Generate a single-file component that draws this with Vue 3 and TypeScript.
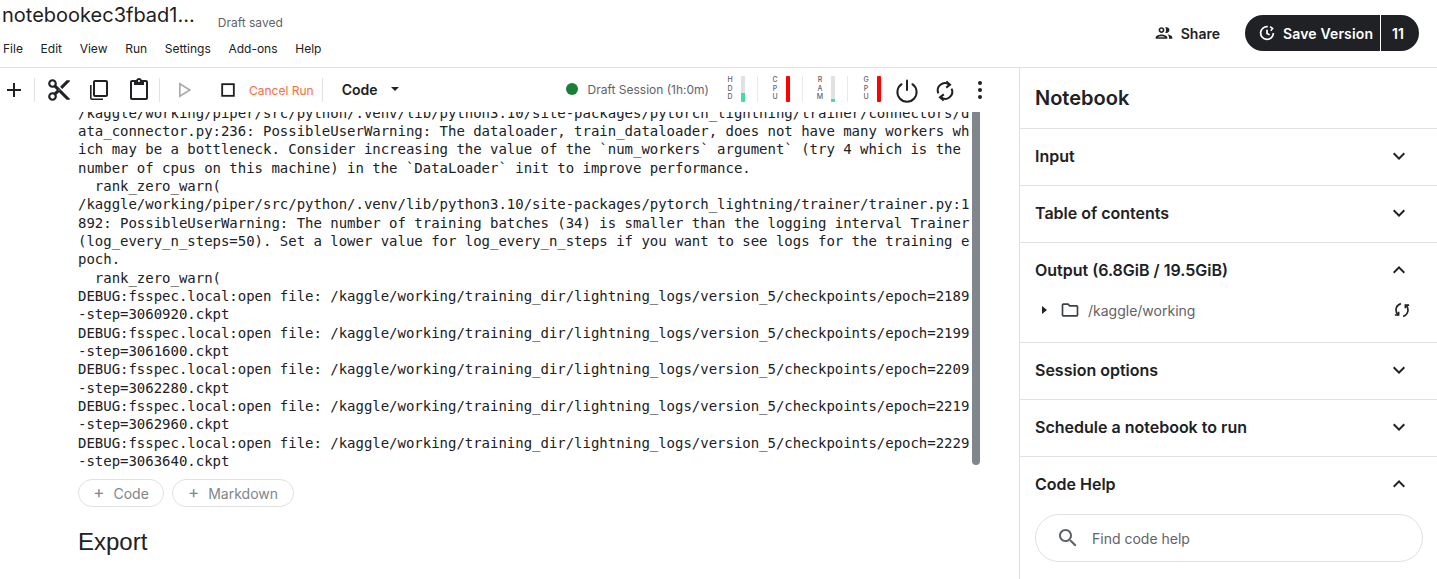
<script setup lang="ts">
const lines: string[] = [
  '/kaggle/working/piper/src/python/.venv/lib/python3.10/site-packages/pytorch_lightning/trainer/connectors/d',
  'ata_connector.py:236: PossibleUserWarning: The dataloader, train_dataloader, does not have many workers wh',
  'ich may be a bottleneck. Consider increasing the value of the `num_workers` argument` (try 4 which is the ',
  'number of cpus on this machine) in the `DataLoader` init to improve performance.',
  '  rank_zero_warn(',
  '/kaggle/working/piper/src/python/.venv/lib/python3.10/site-packages/pytorch_lightning/trainer/trainer.py:1',
  '892: PossibleUserWarning: The number of training batches (34) is smaller than the logging interval Trainer',
  '(log_every_n_steps=50). Set a lower value for log_every_n_steps if you want to see logs for the training e',
  'poch.',
  '  rank_zero_warn(',
  'DEBUG:fsspec.local:open file: /kaggle/working/training_dir/lightning_logs/version_5/checkpoints/epoch=2189',
  '-step=3060920.ckpt',
  'DEBUG:fsspec.local:open file: /kaggle/working/training_dir/lightning_logs/version_5/checkpoints/epoch=2199',
  '-step=3061600.ckpt',
  'DEBUG:fsspec.local:open file: /kaggle/working/training_dir/lightning_logs/version_5/checkpoints/epoch=2209',
  '-step=3062280.ckpt',
  'DEBUG:fsspec.local:open file: /kaggle/working/training_dir/lightning_logs/version_5/checkpoints/epoch=2219',
  '-step=3062960.ckpt',
  'DEBUG:fsspec.local:open file: /kaggle/working/training_dir/lightning_logs/version_5/checkpoints/epoch=2229',
  '-step=3063640.ckpt',
]
const menus = ['File', 'Edit', 'View', 'Run', 'Settings', 'Add-ons', 'Help']
const meters = [
  { letters: ['H', 'D', 'D'], fill: 35, color: '#3fdcb0' },
  { letters: ['C', 'P', 'U'], fill: 100, color: '#ff0000' },
  { letters: ['R', 'A', 'M'], fill: 12, color: '#3fdcb0' },
  { letters: ['G', 'P', 'U'], fill: 100, color: '#ff0000' },
]
const down = 'M16.59 8.59L12 13.17 7.41 8.59 6 10l6 6 6-6z'
const up = 'M12 8l-6 6 1.41 1.41L12 10.83l4.59 4.58L18 14z'
</script>

<template>
  <div class="page">
    <header class="header">
      <div class="head-left">
        <div class="title-row">
          <span class="title">notebookec3fbad1...</span>
          <span class="saved">Draft saved</span>
        </div>
        <nav class="menu">
          <span v-for="m in menus" :key="m">{{ m }}</span>
        </nav>
      </div>
      <div class="head-right">
        <div class="share">
          <svg viewBox="0 0 24 24" width="20" height="20"><path fill="#202124" d="M9 13.75c-2.34 0-7 1.17-7 3.5V19h14v-1.75c0-2.33-4.66-3.5-7-3.5zM4.34 17c.84-.58 2.87-1.25 4.66-1.25s3.82.67 4.66 1.25H4.34zM9 12c1.93 0 3.5-1.57 3.5-3.5S10.93 5 9 5 5.5 6.57 5.5 8.5 7.07 12 9 12zm0-5c.83 0 1.5.67 1.5 1.5S9.83 10 9 10s-1.5-.67-1.5-1.5S8.17 7 9 7zm7.04 6.81c1.16.84 1.96 1.96 1.96 3.44V19h4v-1.75c0-2.02-3.5-3.17-5.96-3.44zM15 12c1.93 0 3.5-1.57 3.5-3.5S16.93 5 15 5c-.54 0-1.04.13-1.5.35.63.89 1 1.98 1 3.15s-.37 2.26-1 3.15c.46.22.96.35 1.5.35z"/></svg>
          <span>Share</span>
        </div>
        <div class="save">
          <div class="save-main">
            <svg viewBox="0 0 24 24" width="18" height="18" fill="none" stroke="#fff" stroke-width="2.3"><path d="M13 3.6A8.5 8.5 0 1 0 20.5 12"/><path d="M12 7.5v5l3.5 2"/><path d="M16 3.5l3.5 2.5-2.5 3" stroke-width="2"/></svg>
            <span>Save Version</span>
          </div>
          <div class="save-count">11</div>
        </div>
      </div>
    </header>

    <div class="body">
      <main class="left">
        <div class="toolbar">
          <button class="tb plus"><svg viewBox="0 0 24 24" width="24" height="24"><path fill="#202124" d="M19 13h-6v6h-2v-6H5v-2h6V5h2v6h6v2z"/></svg></button>
          <i class="tsep sep1"></i>
          <button class="tb cut"><svg viewBox="0 0 24 24" width="26" height="26"><path fill="#202124" d="M9.64 7.64c.23-.5.36-1.05.36-1.64 0-2.21-1.79-4-4-4S2 3.79 2 6s1.79 4 4 4c.59 0 1.14-.13 1.64-.36L10 12l-2.36 2.36C7.14 14.13 6.59 14 6 14c-2.21 0-4 1.79-4 4s1.79 4 4 4 4-1.79 4-4c0-.59-.13-1.14-.36-1.64L12 14l7 7h3v-1L9.64 7.64zM6 8c-1.1 0-2-.89-2-2s.9-2 2-2 2 .89 2 2-.9 2-2 2zm0 12c-1.1 0-2-.89-2-2s.9-2 2-2 2 .89 2 2-.9 2-2 2zm6-7.5c-.28 0-.5-.22-.5-.5s.22-.5.5-.5.5.22.5.5-.22.5-.5.5zM19 3l-6 6 2 2 7-7V3h-3z"/></svg></button>
          <button class="tb copy"><svg viewBox="0 0 24 24" width="24" height="24"><path fill="#202124" d="M8 2h11c1.1 0 2 .9 2 2v13c0 1.1-.9 2-2 2H8c-1.1 0-2-.9-2-2V4c0-1.1.9-2 2-2zm0 2v13h11V4H8zM3 7h1.6v13c0 .2.2.4.4.4h11V22H5c-1.1 0-2-.9-2-2V7z"/></svg></button>
          <button class="tb paste"><svg viewBox="0 0 24 24" width="24" height="24"><path fill="#202124" d="M19 2h-4.18C14.4.84 13.3 0 12 0c-1.3 0-2.4.84-2.82 2H5c-1.1 0-2 .9-2 2v16c0 1.1.9 2 2 2h14c1.1 0 2-.9 2-2V4c0-1.1-.9-2-2-2zm-7 0c.55 0 1 .45 1 1s-.45 1-1 1-1-.45-1-1 .45-1 1-1zm7 18H5V4h2v3h10V4h2v16z"/></svg></button>
          <i class="tsep sep2"></i>
          <button class="tb play"><svg viewBox="0 0 24 24" width="20" height="20"><path fill="none" stroke="#a9abae" stroke-width="2" d="M7 4.5v15L19 12z"/></svg></button>
          <button class="tb stop"><svg viewBox="0 0 24 24" width="20" height="20"><rect x="5" y="5" width="14" height="14" fill="none" stroke="#202124" stroke-width="2.2"/></svg></button>
          <span class="cancel">Cancel Run</span>
          <i class="tsep sep3"></i>
          <span class="code">Code</span>
          <svg class="caret" viewBox="0 0 10 5" width="8" height="4"><path fill="#202124" d="M0 0h10L5 5z"/></svg>
          <span class="spacer"></span>
          <span class="dot"></span>
          <span class="session">Draft Session (1h:0m)</span>
          <div class="meters">
            <div v-for="(m, i) in meters" :key="i" class="meter">
              <div class="letters"><span v-for="(l, j) in m.letters" :key="j">{{ l }}</span></div>
              <div class="track"><div class="fill" :style="{ height: m.fill + '%', background: m.color }"></div></div>
            </div>
          </div>
          <button class="tb power"><svg viewBox="0 0 24 24" width="24" height="24" fill="none" stroke="#202124" stroke-width="2" stroke-linecap="round"><path d="M12 1.5v9.5"/><path d="M6.6 5.2a9.6 9.6 0 1 0 10.8 0"/></svg></button>
          <button class="tb sync"><svg viewBox="0 0 24 24" width="22" height="22" fill="none" stroke="#202124" stroke-width="2.2"><path d="M4.8 14.5A7.8 7.8 0 0 1 16.5 5"/><path d="M13.5 1.5l4 3.6-4.2 3.2"/><path d="M19.2 9.5A7.8 7.8 0 0 1 7.5 19"/><path d="M10.5 22.5l-4-3.6 4.2-3.2"/></svg></button>
          <button class="tb more"><svg viewBox="0 0 6 20" width="6" height="20"><circle cx="3" cy="3" r="2" fill="#202124"/><circle cx="3" cy="10" r="2" fill="#202124"/><circle cx="3" cy="17" r="2" fill="#202124"/></svg></button>
        </div>

        <div class="notebook">
          <div class="output">
            <div class="clip">
              <div class="text">
                <div v-for="(l, i) in lines" :key="i" class="line">{{ l }}</div>
              </div>
            </div>
            <div class="scrollbar"></div>
          </div>
          <div class="adders">
            <span class="adder code-add"><b>+</b>Code</span>
            <span class="adder md-add"><b>+</b>Markdown</span>
          </div>
          <h2 class="export">Export</h2>
        </div>
      </main>

      <aside class="side">
        <h1 class="side-title">Notebook</h1>
        <section class="sec"><div class="sec-head"><span>Input</span><svg viewBox="0 0 24 24" width="24" height="24"><path :d="down"/></svg></div></section>
        <section class="sec"><div class="sec-head"><span>Table of contents</span><svg viewBox="0 0 24 24" width="24" height="24"><path :d="down"/></svg></div></section>
        <section class="sec output-sec">
          <div class="sec-head"><span>Output (6.8GiB / 19.5GiB)</span><svg viewBox="0 0 24 24" width="24" height="24"><path :d="up"/></svg></div>
          <div class="tree">
            <svg class="tri" viewBox="0 0 5 8" width="5" height="8"><path fill="#202124" d="M0 0l5 4-5 4z"/></svg>
            <svg class="folder" viewBox="0 0 24 24" width="20" height="20"><path fill="#3c4043" d="M20 6h-8l-2-2H4c-1.1 0-1.99.9-1.99 2L2 18c0 1.1.9 2 2 2h16c1.1 0 2-.9 2-2V8c0-1.1-.9-2-2-2zm0 12H4V6h5.17l2 2H20v10z"/></svg>
            <span class="path">/kaggle/working</span>
            <svg class="refresh" viewBox="0 0 24 24" width="18" height="18" fill="none" stroke="#202124" stroke-width="2.2"><path d="M10.5 3.5C6.5 5 4 8 4 12c0 2.6 1 5 2.8 6.6"/><path d="M2.5 18.6h5v-4.4"/><path d="M13.5 20.5c4-1.5 6.5-4.5 6.5-8.5 0-2.6-1-5-2.8-6.6"/><path d="M21.5 5.4h-5v4.4"/></svg>
          </div>
        </section>
        <section class="sec"><div class="sec-head"><span>Session options</span><svg viewBox="0 0 24 24" width="24" height="24"><path :d="down"/></svg></div></section>
        <section class="sec"><div class="sec-head"><span>Schedule a notebook to run</span><svg viewBox="0 0 24 24" width="24" height="24"><path :d="down"/></svg></div></section>
        <section class="sec last">
          <div class="sec-head"><span>Code Help</span><svg viewBox="0 0 24 24" width="24" height="24"><path :d="up"/></svg></div>
          <div class="search">
            <svg viewBox="0 0 24 24" width="24" height="24"><path fill="#5f6368" d="M15.5 14h-.79l-.28-.27C15.41 12.59 16 11.11 16 9.5 16 5.91 13.09 3 9.5 3S3 5.91 3 9.5 5.91 16 9.5 16c1.61 0 3.09-.59 4.23-1.57l.27.28v.79l5 4.99L20.49 19l-4.99-5zm-6 0C7.01 14 5 11.99 5 9.5S7.01 5 9.5 5 14 7.01 14 9.5 11.99 14 9.5 14z"/></svg>
            <span>Find code help</span>
          </div>
        </section>
      </aside>
    </div>
  </div>
</template>

<style scoped>
.page {
  width: 1437px;
  height: 579px;
  overflow: hidden;
  background: #fff;
  color: #202124;
  font-family: Inter, "Liberation Sans", sans-serif;
  display: flex;
  flex-direction: column;
}
.header {
  height: 67px;
  flex: none;
  display: flex;
  justify-content: space-between;
  border-bottom: 1px solid #e0e1e3;
  box-sizing: content-box;
}
.head-left { padding-left: 2px; display: flex; flex-direction: column; }
.title-row { display: flex; align-items: flex-start; height: 34px; padding-top: 2px; box-sizing: border-box; }
.title { font-size: 20px; line-height: 26px; }
.saved { font-size: 12px; line-height: 16px; color: #5f6368; margin-left: 23px; margin-top: 13px; }
.menu { display: flex; gap: 17.7px; font-size: 12px; line-height: 16px; padding-left: 1px; margin-top: 7px; color: #202124; }
.head-right { display: flex; align-items: center; padding-right: 18px; height: 64px; padding-top: 2px; box-sizing: border-box; }
.share { display: flex; align-items: center; gap: 7px; font-size: 14px; font-weight: 600; margin-right: 25px; }
.save {
  display: flex;
  height: 36px;
  border-radius: 18px;
  background: #202124;
  color: #fff;
  font-size: 14px;
  font-weight: 600;
  letter-spacing: 0.15px;
}
.save-main { display: flex; align-items: center; gap: 7px; padding: 0 0 0 13px; width: 136px; box-sizing: border-box; border-right: 1px solid #fff; }
.save-count { width: 38px; display: flex; align-items: center; padding-left: 11px; box-sizing: border-box; }
.body { flex: 1; display: flex; min-height: 0; }
.left { width: 1019px; flex: none; border-right: 1px solid #e0e1e3; box-sizing: content-box; display: flex; flex-direction: column; min-width: 0; }
.toolbar { height: 44px; flex: none; display: flex; align-items: center; }
.tb { border: 0; background: none; padding: 0; display: flex; align-items: center; justify-content: center; flex: none; }
.plus { margin-left: 2px; }
.tsep { width: 1px; height: 24px; background: #e0e1e3; flex: none; }
.sep1 { margin-left: 8px; }
.cut { margin-left: 11px; }
.copy { margin-left: 15px; }
.paste { margin-left: 16px; }
.sep2 { margin-left: 8px; }
.play { margin-left: 14px; }
.stop { margin-left: 24px; }
.cancel { font-size: 12px; color: #fb6d3c; margin-left: 11px; }
.sep3 { margin-left: 8px; }
.code { font-size: 14px; font-weight: 600; margin-left: 19px; margin-top: -2px; }
.caret { margin-left: 13px; margin-top: -2px; }
.spacer { flex: 1; }
.dot { width: 12px; height: 12px; border-radius: 50%; background: #1a7f37; flex: none; margin-top: -2px; }
.session { font-size: 12px; color: #5f6368; margin-left: 10px; margin-top: -2px; }
.meters { display: flex; margin-left: 4px; margin-top: -2px; }
.meter { width: 45px; display: flex; align-items: center; justify-content: flex-end; padding-right: 12px; box-sizing: border-box; gap: 7px; border-right: 1px solid #e8e9ea; height: 26px; }
.meter:last-child { border-right: 0; }
.letters { display: flex; flex-direction: column; font-size: 7px; line-height: 8.4px; color: #5f6368; text-align: center; font-weight: 500; width: 8px; }
.track { width: 4px; height: 26px; background: #e0e1e3; border-radius: 1px; display: flex; align-items: flex-end; overflow: hidden; }
.fill { width: 100%; }
.power { margin-left: 2px; margin-top: 2px; }
.sync { margin-left: 15px; margin-top: 2px; }
.more { margin-left: 21px; margin-right: 36px; margin-top: -1px; }
.notebook { flex: 1; padding-left: 78px; display: flex; flex-direction: column; min-height: 0; }
.output { display: flex; height: 358px; flex: none; gap: 2px; }
.clip { width: 892px; height: 358px; overflow: hidden; }
.text { margin-top: -8.35px; }
.line {
  font-family: "DejaVu Sans Mono", monospace;
  font-size: 14px;
  line-height: 18.33px;
  letter-spacing: -0.02px;
  white-space: pre;
  color: #202124;
}
.scrollbar { width: 8px; height: 353px; background: #80868b; border-radius: 0 0 4px 4px; }
.adders { display: flex; gap: 8px; margin-top: 9px; }
.adder {
  height: 28px;
  box-sizing: border-box;
  border: 1px solid #e0e1e3;
  border-radius: 14px;
  display: flex;
  align-items: center;
  font-size: 14px;
  color: #80868b;
  justify-content: center;
}
.adder b { font-weight: 400; font-size: 17px; margin-right: 9px; margin-top: -3px; }
.code-add { width: 86px; }
.md-add { width: 122px; }
.export { font-family: "Liberation Sans", sans-serif; font-weight: 400; font-size: 24px; line-height: 30px; margin: 20px 0 0; color: #202124; }
.side { flex: 1; min-width: 0; display: flex; flex-direction: column; }
.side-title { font-size: 20px; font-weight: 600; margin: 0; height: 60px; line-height: 60px; padding-left: 15px; border-bottom: 1px solid #e0e1e3; box-sizing: content-box; }
.sec { border-bottom: 1px solid #e0e1e3; padding: 0 27px 0 15px; }
.sec.last { border-bottom: 0; }
.sec-head { height: 54px; padding-bottom: 2px; box-sizing: content-box; display: flex; align-items: center; justify-content: space-between; font-size: 16px; font-weight: 600; }
.sec-head svg { fill: #202124; margin-right: -1px; }
.output-sec { height: 99px; box-sizing: content-box; }
.tree { display: flex; align-items: center; height: 22px; padding-left: 7px; margin-right: -1px; }
.folder { margin-left: 13px; }
.path { font-size: 14px; color: #5f6368; margin-left: 8px; flex: 1; }
.refresh { margin-right: 0; }
.search {
  margin-top: 1px;
  width: 388px;
  height: 48px;
  box-sizing: border-box;
  border: 1px solid #e0e1e3;
  border-radius: 24px;
  display: flex;
  align-items: center;
  padding-left: 20px;
  gap: 12px;
  font-size: 14px;
  color: #5f6368;
}
</style>
